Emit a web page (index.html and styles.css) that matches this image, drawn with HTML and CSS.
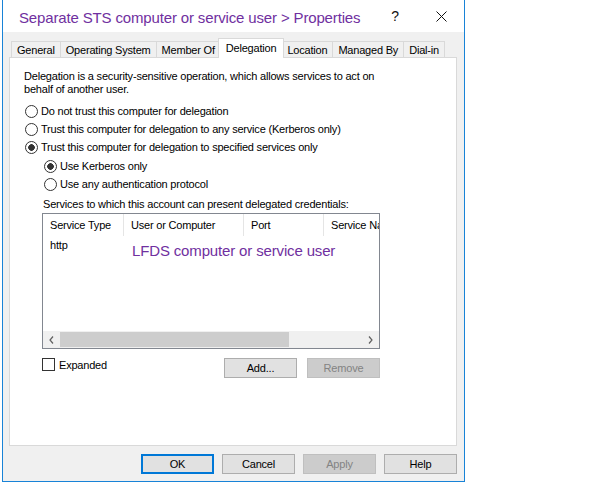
FILE: index.html
```html
<!DOCTYPE html>
<html lang="en">
<head>
    <meta charset="UTF-8">
    <meta name="viewport" content="width=device-width, initial-scale=1.0">
    <title>Separate STS computer or service user &gt; Properties</title>
    <link rel="stylesheet" href="styles.css">
</head>
<body>
    <div class="window">
        <div class="titlebar">
            <span class="title">Separate STS computer or service user &gt; Properties</span>
            <span class="caption-btn help-btn">?</span>
            <span class="caption-btn close-btn">
                <svg width="11" height="11" viewBox="0 0 11 11">
                    <path d="M0.5 0.5 L10.5 10.5 M10.5 0.5 L0.5 10.5" stroke="#111" stroke-width="1" fill="none"/>
                </svg>
            </span>
        </div>

        <div class="dialog-body">
            <div class="tabs">
                <div class="tab">General</div>
                <div class="tab">Operating System</div>
                <div class="tab">Member Of</div>
                <div class="tab active">Delegation</div>
                <div class="tab">Location</div>
                <div class="tab">Managed By</div>
                <div class="tab">Dial-in</div>
            </div>

            <div class="panel">
                <p class="intro">Delegation is a security-sensitive operation, which allows services to act on behalf of another user.</p>

                <div class="options">
                    <div class="option"><span class="radio"></span>Do not trust this computer for delegation</div>
                    <div class="option"><span class="radio"></span>Trust this computer for delegation to any service (Kerberos only)</div>
                    <div class="option"><span class="radio checked"></span>Trust this computer for delegation to specified services only</div>
                </div>

                <div class="indent">
                    <div class="sub-options">
                        <div class="option"><span class="radio checked"></span>Use Kerberos only</div>
                        <div class="option"><span class="radio"></span>Use any authentication protocol</div>
                    </div>

                    <div class="list-caption">Services to which this account can present delegated credentials:</div>

                    <div class="listview">
                        <div class="list-header">
                            <div class="col col-type sep">Service Type</div>
                            <div class="col col-user sep">User or Computer</div>
                            <div class="col col-port sep">Port</div>
                            <div class="col col-name">Service Name</div>
                        </div>
                        <div class="list-body">
                            <div class="list-row">
                                <div class="col col-type">http</div>
                            </div>
                            <div class="annotation">LFDS computer or service user</div>
                        </div>
                        <div class="hscroll">
                            <span class="arrow">
                                <svg width="5" height="8" viewBox="0 0 5 8"><path d="M4 0.5 L1 4 L4 7.5" stroke="#606060" stroke-width="1.2" fill="none"/></svg>
                            </span>
                            <div class="track"><div class="thumb"></div></div>
                            <span class="arrow">
                                <svg width="5" height="8" viewBox="0 0 5 8"><path d="M1 0.5 L4 4 L1 7.5" stroke="#606060" stroke-width="1.2" fill="none"/></svg>
                            </span>
                        </div>
                    </div>

                    <div class="list-actions">
                        <div class="check"><span class="checkbox"></span>Expanded</div>
                        <button class="btn">Add...</button>
                        <button class="btn" disabled>Remove</button>
                    </div>
                </div>
            </div>

            <div class="footer">
                <button class="btn default">OK</button>
                <button class="btn">Cancel</button>
                <button class="btn" disabled>Apply</button>
                <button class="btn">Help</button>
            </div>
        </div>
    </div>
</body>
</html>
```

FILE: styles.css
```css
body {
    margin: 0;
    background: #fff;
    font-family: "Liberation Sans", Arial, sans-serif;
    font-size: 11px;
    letter-spacing: -0.2px;
    color: #000;
}
.window {
    width: 463px;
    margin-left: 2px;
    box-sizing: border-box;
    border: 1px solid #1883d7;
    border-top: none;
    background: #f0f0f0;
}
.titlebar {
    height: 32px;
    background: #fff;
    display: flex;
    align-items: center;
    padding-left: 16px;
}
.title {
    flex: 1;
    padding-top: 2px;
    font-size: 15px;
    letter-spacing: -0.15px;
    color: #7030a0;
}
.caption-btn {
    width: 46px;
    height: 32px;
    display: flex;
    align-items: center;
    justify-content: center;
}
.help-btn {
    font-size: 14px;
    color: #111;
}
.dialog-body {
    padding: 6px 7px 7px 6px;
}

/* tabs */
.tabs {
    display: flex;
    align-items: flex-end;
    height: 19px;
    padding-left: 2px;
}
.tab {
    height: 16px;
    box-sizing: border-box;
    border: 1px solid #d9d9d9;
    border-bottom: none;
    margin-left: -1px;
    padding: 0 5px;
    display: flex;
    align-items: center;
    background: #f0f0f0;
    white-space: nowrap;
}
.tab:first-child {
    margin-left: 0;
}
.tab.active {
    height: 20px;
    margin: 0 -2px -1px -3px;
    padding: 0 7px 1px;
    background: #fff;
    position: relative;
    z-index: 1;
}
.panel {
    height: 389px;
    box-sizing: border-box;
    background: #fff;
    border: 1px solid #d9d9d9;
    padding: 12px 14px 0;
}
.intro {
    margin: 0;
    width: 360px;
    line-height: 13px;
}

/* radios */
.options {
    margin-top: 6px;
}
.option {
    display: flex;
    align-items: center;
    height: 18px;
    white-space: nowrap;
}
.radio {
    width: 13px;
    height: 13px;
    box-sizing: border-box;
    border: 1px solid #333;
    border-radius: 50%;
    margin: 0 3px 0 1px;
    background: #fff;
}
.radio.checked {
    background: radial-gradient(circle, #333 0 3px, #fff 3.6px);
}
.indent {
    padding-left: 19px;
}
.sub-options {
    margin-top: 1px;
}
.list-caption {
    margin-top: 2px;
    height: 18px;
    line-height: 18px;
    white-space: nowrap;
}

/* list view */
.listview {
    width: 338px;
    height: 136px;
    box-sizing: border-box;
    border: 1px solid #828790;
    display: flex;
    flex-direction: column;
    overflow: hidden;
    margin-left: -1px;
}
.list-header {
    display: flex;
    height: 22px;
    flex-shrink: 0;
}
.col {
    box-sizing: border-box;
    padding-left: 7px;
    display: flex;
    align-items: center;
    white-space: nowrap;
}
.sep {
    border-right: 1px solid #e5e5e5;
}
.col-type { width: 81px; }
.col-user { width: 120px; }
.col-port { width: 80px; }
.col-name {
    flex: 1;
    overflow: hidden;
}
.list-body {
    flex: 1;
    position: relative;
}
.list-row {
    display: flex;
    height: 17px;
}
.annotation {
    position: absolute;
    left: 89px;
    top: 6px;
    font-size: 15px;
    letter-spacing: -0.15px;
    color: #7030a0;
    white-space: nowrap;
}
.hscroll {
    height: 17px;
    flex-shrink: 0;
    display: flex;
    background: #f0f0f0;
}
.arrow {
    width: 17px;
    display: flex;
    align-items: center;
    justify-content: center;
}
.track {
    flex: 1;
    padding: 1px 0;
}
.thumb {
    width: 229px;
    height: 100%;
    background: #cdcdcd;
}

/* bottom of panel */
.list-actions {
    width: 338px;
    margin: 9px 0 0 -1px;
    display: flex;
    align-items: flex-start;
    gap: 10px;
}
.check {
    flex: 1;
    display: flex;
    align-items: center;
    height: 13px;
}
.checkbox {
    width: 13px;
    height: 13px;
    box-sizing: border-box;
    border: 1px solid #333;
    margin-right: 4px;
    background: #fff;
}
.btn {
    width: 73px;
    height: 20px;
    box-sizing: border-box;
    border: 1px solid #adadad;
    background: #e1e1e1;
    padding: 0;
    font: inherit;
    letter-spacing: inherit;
    color: #000;
}
.btn:disabled {
    background: #cccccc;
    border-color: #bfbfbf;
    color: #838383;
}
.btn.default {
    border-color: #0078d7;
    box-shadow: inset 0 0 0 1px #0078d7;
}
.footer {
    display: flex;
    justify-content: flex-end;
    gap: 8px;
    margin-top: 8px;
}
```
